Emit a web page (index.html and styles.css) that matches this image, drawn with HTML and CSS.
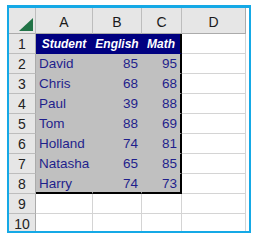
FILE: index.html
```html
<!DOCTYPE html>
<html>
<head>
<meta charset="utf-8">
<link rel="stylesheet" href="styles.css">
</head>
<body>
<div class="frame">
  <div class="sheet">
    <div class="hc corner"><svg width="14" height="13" viewBox="0 0 14 13"><polygon points="14,0 14,13 0,13" fill="#217346"/></svg></div>
    <div class="hc">A</div>
    <div class="hc">B</div>
    <div class="hc">C</div>
    <div class="hc last">D</div>

    <div class="rh">1</div>
    <div class="c th">Student</div>
    <div class="c th">English</div>
    <div class="c th edge">Math</div>
    <div class="c e"></div>

    <div class="rh">2</div><div class="c d">David</div><div class="c d n">85</div><div class="c d n edge">95</div><div class="c e"></div>
    <div class="rh">3</div><div class="c d">Chris</div><div class="c d n">68</div><div class="c d n edge">68</div><div class="c e"></div>
    <div class="rh">4</div><div class="c d">Paul</div><div class="c d n">39</div><div class="c d n edge">88</div><div class="c e"></div>
    <div class="rh">5</div><div class="c d">Tom</div><div class="c d n">88</div><div class="c d n edge">69</div><div class="c e"></div>
    <div class="rh">6</div><div class="c d">Holland</div><div class="c d n">74</div><div class="c d n edge">81</div><div class="c e"></div>
    <div class="rh">7</div><div class="c d">Natasha</div><div class="c d n">65</div><div class="c d n edge">85</div><div class="c e"></div>
    <div class="rh">8</div><div class="c d bot">Harry</div><div class="c d n bot">74</div><div class="c d n edge bot">73</div><div class="c e"></div>

    <div class="rh">9</div><div class="c e"></div><div class="c e"></div><div class="c e"></div><div class="c e"></div>
    <div class="rh">10</div><div class="c e"></div><div class="c e"></div><div class="c e"></div><div class="c e"></div>
  </div>
</div>
</body>
</html>
```
FILE: styles.css
```css
html, body {
  margin: 0;
  padding: 0;
  background: #ffffff;
}
body {
  font-family: "Liberation Sans", Arial, sans-serif;
}
.frame {
  margin: 5px 0 0 7px;
  width: 240px;
  height: 223px;
  border: 2px solid #15A9E6;
  border-top-width: 3px;
  overflow: hidden;
  background: #fff;
}
.sheet {
  display: grid;
  grid-template-columns: 27px 57px 49px 40px 64px;
  grid-template-rows: 26px repeat(10, 20px);
}
.hc {
  box-sizing: border-box;
  background: #E6E6E6;
  border-right: 1px solid #BDBDBD;
  border-bottom: 1px solid #ABABAB;
  display: flex;
  align-items: center;
  justify-content: center;
  font-size: 14px;
  color: #1a1a1a;
  padding-top: 2px;
}
.hc.corner {
  justify-content: flex-end;
  align-items: flex-end;
  padding: 0 2px 2px 0;
}
.hc.last {
  border-right-color: #ABABAB;
}
.rh {
  box-sizing: border-box;
  background: #E6E6E6;
  border-right: 1px solid #ABABAB;
  border-bottom: 1px solid #BDBDBD;
  display: flex;
  align-items: center;
  justify-content: center;
  font-size: 14px;
  color: #222;
}
.c {
  box-sizing: border-box;
  border-right: 1px solid #D4D4D4;
  border-bottom: 1px solid #D4D4D4;
  display: flex;
  align-items: center;
  font-size: 13.5px;
  white-space: nowrap;
}
.th {
  background: #000080;
  color: #ffffff;
  font-weight: bold;
  font-style: italic;
  font-size: 12px;
  justify-content: center;
  border-color: #000080;
}
.d {
  background: #C0C0C0;
  color: #1F1F8C;
  padding: 0 3px;
  border-color: #C0C0C0;
}
.n {
  justify-content: flex-end;
}
.edge {
  border-right: 2px solid #000;
}
.bot {
  border-bottom: 2px solid #000;
}
```
